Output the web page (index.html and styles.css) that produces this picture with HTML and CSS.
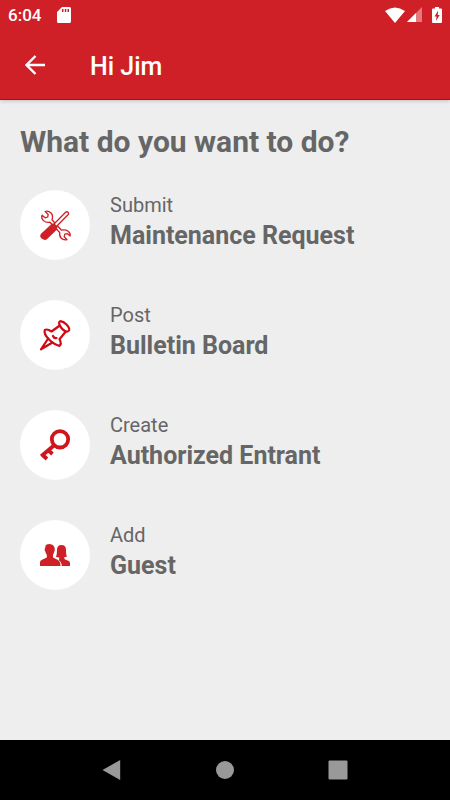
FILE: index.html
```html
<!DOCTYPE html>
<html lang="en">
<head>
<meta charset="utf-8">
<meta name="viewport" content="width=device-width, initial-scale=1">
<title>Hi Jim</title>
<link rel="stylesheet" href="styles.css">
</head>
<body>
<header class="top">
  <div class="status">
    <span>6:04</span>
    <svg class="sd" width="14" height="16" viewBox="0 0 14 16"><path fill="#fff" fill-rule="evenodd" d="M5 0h7.500Q14 0 14 1.500v13Q14 16 12.500 16h-11Q0 16 0 14.500V5zM5 2v3h1.500V2zM7.800 2v3h1.500V2zM10.500 2v3H12V2z"/></svg>
    <div class="signals">
      <svg width="20" height="16" viewBox="0 0 20 16"><path fill="#fff" d="M0 4Q10-3 20 4L10 16z"/></svg>
      <svg width="15" height="16" viewBox="0 0 15 16"><path fill="#fff" opacity=".4" d="M15 0v15H0z"/><path fill="#fff" d="M9 6v9H0z"/></svg>
      <svg class="battery" width="10" height="16" viewBox="0 0 10 16"><path fill="#fff" d="M3 0h4v1.500h2q1 0 1 1V15q0 1-1 1H1q-1 0-1-1V2.500q0-1 1-1h2z"/><path fill="#d02027" d="M6.200 3.500 2.500 9.500h2L4 14l3.700-6h-2z"/></svg>
    </div>
  </div>
  <div class="bar">
    <button class="back" aria-label="Back"><svg width="20" height="20" viewBox="0 0 20 20"><path d="M20 10H2M10.500 1 1.500 10l9 9" fill="none" stroke="#fff" stroke-width="2.400"/></svg></button>
    <h1>Hi Jim</h1>
  </div>
</header>
<main>
  <h2>What do you want to do?</h2>
  <nav class="actions" aria-label="Actions">
    <a class="action" href="#maintenance">
      <span class="disc"><svg width="40" height="40" viewBox="0 0 40 40">
        <path class="thin" d="M17 14.800 26.500 25.200Q30.500 24.200 33.200 26.200T35 31L32.500 28.700 29.800 29.200 29.200 31.800 32 34.700Q28.500 35.500 26.300 33.300T24.700 27.500L15 17.200Q11 18 8.500 15.600T7 10.200L10.200 12.800 12.700 12 13.200 9.500 10.200 6.500Q13.500 5.500 16 8T17 14.800z"/>
        <path class="thin" d="M18.800 19.300 30.600 7.300Q31.800 6.200 33 7.300T33 9.700L21.200 21.700z"/>
        <path class="solid" d="M16 19.500Q18.500 17.500 21 20T21.500 25L12.200 34Q10 36 7 33.800T6 28.700z"/>
      </svg></span>
      <span class="label"><span class="verb">Submit</span><strong>Maintenance Request</strong></span>
    </a>
    <a class="action" href="#bulletin">
      <span class="disc"><svg width="40" height="40" viewBox="0 0 40 40">
        <path class="line" d="M24.800 10.500 16.500 16.500Q12 13.500 9.800 15 8.500 19 14 24.500T24.500 30.800Q27 29 24.500 24.300L30.800 16.500"/>
        <path class="line" d="M24.800 10.500Q23.200 7 25.200 6.200 28.500 6.500 31.500 9.500T34.200 15Q33.500 17 30.800 16.500 27 15 24.800 10.500zM13.200 23.500 6 34.300 17.500 27.500M18 21Q19 23.500 21.500 23"/>
      </svg></span>
      <span class="label"><span class="verb">Post</span><strong>Bulletin Board</strong></span>
    </a>
    <a class="action" href="#entrant">
      <span class="disc"><svg width="40" height="40" viewBox="0 0 40 40">
        <circle class="key" cx="25" cy="14.300" r="8.200"/>
        <path class="key" d="M19.200 20.200 6.200 31.200M7.500 30 12 34M13 25 17.500 29"/>
      </svg></span>
      <span class="label"><span class="verb">Create</span><strong>Authorized Entrant</strong></span>
    </a>
    <a class="action" href="#guest">
      <span class="disc"><svg width="40" height="40" viewBox="0 0 40 40">
        <path class="solid" d="M23.500 25Q24.500 24.500 24.200 22.500L21 22Q22 20 22 15 22 10 26.500 10T31 15Q31 20 32 21.500L29 22.500Q29 24.500 32 25.300T35 28V31H26.800Q26.800 27.500 23.500 25z"/>
        <path class="solid" d="M5 31V27.500Q5 25.500 7 24.700L11.800 22.500V19.800Q10.600 18.500 10.400 16.500L9.800 16V13L10.400 12.500V11Q11 9 14.500 9T19.200 11.500V12.500L19.700 13V16L19.200 16.500Q19 18.500 18 19.800V22.500L22.500 24.700Q25.500 26 25.500 31z"/>
      </svg></span>
      <span class="label"><span class="verb">Add</span><strong>Guest</strong></span>
    </a>
  </nav>
</main>
<footer class="system">
  <button aria-label="System back"><svg width="22" height="20" viewBox="0 0 22 20"><path d="M18.200 0V20L.500 10z"/></svg></button>
  <button aria-label="Home"><svg width="20" height="20" viewBox="0 0 20 20"><circle cx="10" cy="10" r="9"/></svg></button>
  <button aria-label="Recent apps"><svg width="20" height="20" viewBox="0 0 20 20"><rect x=".5" y=".5" width="19" height="19" rx="1"/></svg></button>
</footer>
</body>
</html>
```
FILE: styles.css
```css
* { box-sizing: border-box; }
body {
  margin: 0;
  min-height: 100vh;
  display: flex;
  flex-direction: column;
  background: #eee;
  color: #666;
  font-family: Roboto, "Liberation Sans", sans-serif;
}
h1, h2 { margin: 0; }
svg { display: block; }
button { border: 0; padding: 0; background: none; }
.top {
  background: #d02027;
  color: #fff;
  border-bottom: 1px solid #c4040a;
  box-shadow: 0 1px 4px rgba(0, 0, 0, .2);
}
.status {
  display: flex;
  align-items: center;
  height: 30px;
  padding: 0 8px;
  font-size: 17px;
  font-weight: 500;
}
.sd { margin-left: 16px; }
.signals { display: flex; gap: 2px; margin-left: auto; }
.battery { margin-left: 8px; }
.bar {
  display: flex;
  align-items: center;
  gap: 45px;
  height: 69px;
  padding: 0 25px;
}
.bar h1 { padding-top: 4px; font-size: 25px; font-weight: 500; line-height: 30px; }
main { flex: 1; padding: 24px 20px; }
h2 { font-size: 30px; line-height: 36px; font-weight: 700; }
.actions { display: flex; flex-direction: column; gap: 40px; margin-top: 30px; }
.action { display: flex; gap: 20px; color: inherit; text-decoration: none; }
.disc {
  display: flex;
  align-items: center;
  justify-content: center;
  width: 70px;
  height: 70px;
  border-radius: 50%;
  background: #fff;
}
.label { display: flex; flex-direction: column; gap: 1px; }
.verb { font-size: 20px; line-height: 30px; }
.label strong { font-size: 25px; line-height: 30px; }
.solid { fill: #d02027; }
.thin { fill: #fff; stroke: #d02027; stroke-width: 1.3; stroke-linejoin: round; }
.line { fill: none; stroke: #cf0a14; stroke-width: 2.2; stroke-linejoin: round; stroke-linecap: round; }
.key { fill: none; stroke: #d0151d; stroke-width: 3.8; }
.system {
  display: flex;
  height: 60px;
  padding: 0 12.5%;
  background: #000;
}
.system button { flex: 1; display: flex; align-items: center; justify-content: center; }
.system svg { fill: #999; }
```
